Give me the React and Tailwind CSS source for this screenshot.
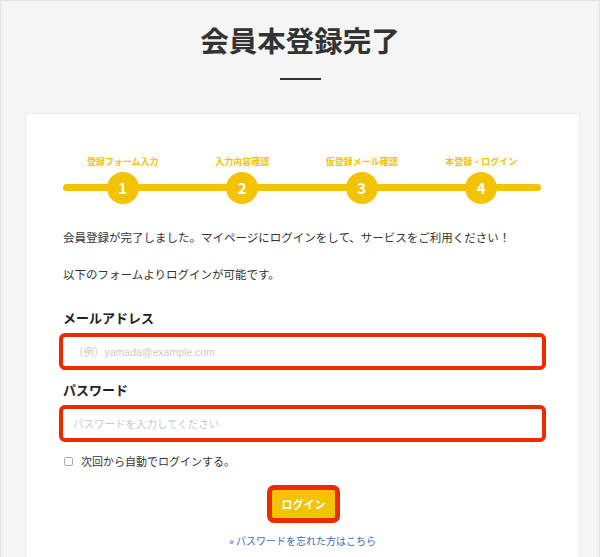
const steps = [
  { no: 1, label: "登録フォーム入力" },
  { no: 2, label: "入力内容確認" },
  { no: 3, label: "仮登録メール確認" },
  { no: 4, label: "本登録・ログイン" },
];

const font = { fontFamily: '"Noto Sans CJK JP", "Noto Sans", sans-serif' };
const latinFont = { fontFamily: '"Liberation Sans", "Noto Sans CJK JP", sans-serif' };

const StepBar = () => (
  <div className="relative ml-[4px] w-[478px]">
    {/* line behind the circles */}
    <div className="absolute left-0 right-0 top-[28px] h-[7px] rounded-full bg-[#f3c300]" />
    <div className="relative grid grid-cols-4">
      {steps.map((s) => (
        <div key={s.no} className="flex flex-col items-center">
          <span className="text-[9px] font-bold leading-[12px] text-[#f3c300]">{s.label}</span>
          <span className="mt-[4px] flex h-[32px] w-[32px] items-center justify-center rounded-full bg-[#f3c300] text-[15px] font-bold text-white">
            {s.no}
          </span>
        </div>
      ))}
    </div>
  </div>
);

const Field = ({ label, placeholder, type }) => (
  <>
    <p className="pl-[4px] text-[13px] font-bold leading-[20px] text-[#222]">{label}</p>
    <div className="mt-[5px] h-[37px] rounded-[6px] border-[4px] border-[#ee2b00] bg-white">
      <input
        type={type}
        placeholder={placeholder}
        className="h-full w-full bg-transparent pl-[10px] text-[10.5px] text-[#333] outline-none placeholder:text-[#c9c9c9]"
        style={latinFont}
      />
    </div>
  </>
);

export default function App() {
  return (
    <div className="min-h-screen border border-[#e3e3e3] bg-[#f5f5f5] text-[#333]" style={font}>
      <h1 className="pt-[19px] text-center text-[28.5px] font-bold leading-[40px] text-[#333]">会員本登録完了</h1>
      <div className="mx-auto mt-[18px] h-[2px] w-[41px] bg-[#333]" />

      <div className="ml-[24px] mt-[33px] w-[555px] border border-[#ececec] bg-white px-[33px] pb-[20px] pt-[42px]">
        <StepBar />

        <p className="mt-[23px] pl-[4px] text-[11.5px] leading-[20px]">
          会員登録が完了しました。マイページにログインをして、サービスをご利用ください！
        </p>
        <p className="mt-[17px] pl-[4px] text-[11.5px] leading-[20px]">以下のフォームよりログインが可能です。</p>

        <div className="mt-[24px]">
          <Field label="メールアドレス" placeholder="（例）yamada@example.com" type="email" />
        </div>
        <div className="mt-[10px]">
          <Field label="パスワード" placeholder="パスワードを入力してください" type="password" />
        </div>

        <label className="mt-[10px] flex items-center gap-[8px] pl-[5px] text-[11px] leading-[18px]">
          <span className="h-[9px] w-[9px] rounded-[2px] border border-[#aaa] bg-white" />
          次回から自動でログインする。
        </label>

        <div className="mt-[15px] flex justify-center">
          <button className="ml-[2px] h-[38px] w-[73px] rounded-[7px] border-[5px] border-[#ee2b00] bg-[#f3c300] text-[11px] font-bold text-white" style={font}>
            ログイン
          </button>
        </div>

        <p className="mt-[11px] text-center text-[10px] leading-[14px] text-[#3b6db3]">
          » パスワードを忘れた方はこちら
        </p>
      </div>
    </div>
  );
}
